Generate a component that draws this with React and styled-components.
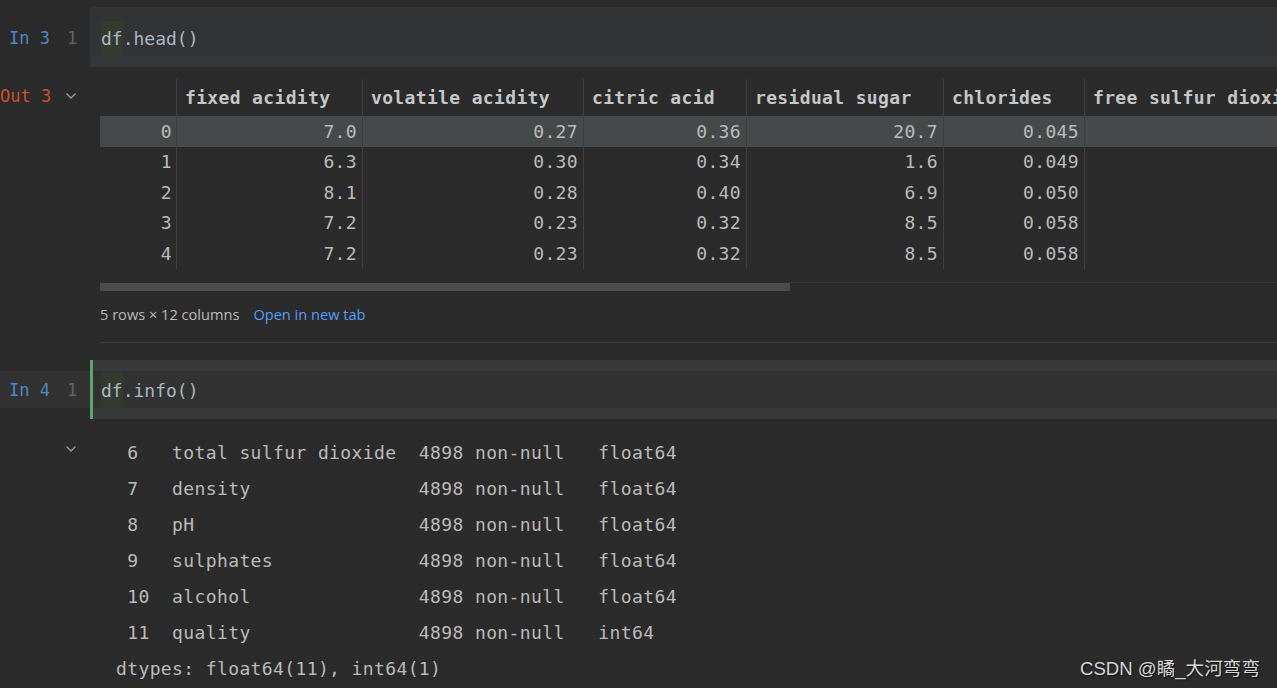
import React from 'react';
import styled, { createGlobalStyle } from 'styled-components';

const mono = `'DejaVu Sans Mono', 'Liberation Mono', monospace`;

const GlobalStyle = createGlobalStyle`
  html, body {
    margin: 0;
    padding: 0;
    background: #2b2b2b;
  }
  body {
    overflow: hidden;
    font-family: ${mono};
  }
`;

const Page = styled.div`
  position: relative;
  width: 1277px;
  height: 688px;
  overflow: hidden;
  padding-top: 7px;
  box-sizing: border-box;
`;

const CellRow = styled.div`
  display: flex;
  height: ${(props) => props.h}px;
  background: ${(props) => props.fill || 'transparent'};
`;

const Gutter = styled.div`
  width: 90px;
  flex: none;
  display: flex;
  align-items: ${(props) => (props.top ? 'flex-start' : 'center')};
  height: ${(props) => (props.top ? '37px' : 'auto')};
  padding-top: ${(props) => (props.top ? 0 : 2)}px;
  box-sizing: border-box;
  font-size: 17px;
  font-family: ${mono};
  line-height: 35px;
`;

const Label = styled.span`
  width: 50px;
  text-align: right;
  white-space: nowrap;
  color: ${(props) => props.color};
`;

const LineNo = styled.span`
  margin-left: 17px;
  color: #606366;
`;

const Chevron = styled.svg`
  margin-left: 15px;
  margin-top: ${(props) => props.offset || 0}px;
  flex: none;
`;

const Editor = styled.div`
  flex: 1;
  display: flex;
  align-items: center;
  background: ${(props) => props.bg};
  border-left: 3px solid ${(props) => props.marker || 'transparent'};
  padding-left: 8px;
  padding-top: ${(props) => (props.code ? 2 : 0)}px;
`;

const Code = styled.span`
  font-size: 18px;
  color: #a9b7c6;
  line-height: 35px;
`;

const Ident = styled.span`
  display: inline-block;
  background: #333b30;
  line-height: 35px;
`;

const OutputRow = styled.div`
  display: flex;
  margin-top: ${(props) => props.gap}px;
`;

const OutputBody = styled.div`
  flex: 1;
  min-width: 0;
  padding-left: ${(props) => props.indent}px;
`;

const TableWrap = styled.div`
  overflow: hidden;
`;

const Table = styled.table`
  width: 1284px;
  table-layout: fixed;
  border-collapse: separate;
  border-spacing: 0;
  font-family: ${mono};
  font-size: 18px;
  letter-spacing: 0.35px;
`;

const HeadCell = styled.th`
  height: 37px;
  padding: 0 0 0 8px;
  text-align: left;
  white-space: nowrap;
  overflow: hidden;
  color: #c4c6c8;
  font-weight: bold;
  border-left: ${(props) => (props.index ? 'none' : '1px solid #3c3f41')};
`;

const Row = styled.tr`
  background: ${(props) => (props.active ? '#45494a' : 'transparent')};
`;

const Cell = styled.td`
  height: 30.5px;
  padding: 0 ${(props) => (props.index ? 4 : 5)}px 0 0;
  text-align: right;
  white-space: nowrap;
  color: #bbbbbb;
  border-left: ${(props) => (props.index ? 'none' : '1px solid #3c3f41')};
`;

const ScrollTrack = styled.div`
  display: flex;
  margin-top: 13px;
  height: 9px;
`;

const ScrollThumb = styled.div`
  width: 690px;
  height: 8px;
  margin-top: 1px;
  background: #4b4b4b;
`;

const ScrollRest = styled.div`
  flex: 1;
  border-top: 1px solid #363738;
`;

const Summary = styled.div`
  display: flex;
  gap: 14px;
  margin-top: 13px;
  height: 20px;
  line-height: 20px;
  font-family: 'Open Sans', 'Noto Sans', sans-serif;
  font-size: 14.6px;
  color: #bbbbbb;
`;

const Link = styled.span`
  color: #589df6;
`;

const Separator = styled.div`
  margin-top: 18px;
  height: 1px;
  background: #3a3b3c;
`;

const InfoText = styled.pre`
  margin: 0;
  font-family: ${mono};
  font-size: 18px;
  letter-spacing: 0.38px;
  line-height: 36px;
  color: #bbbbbb;
`;

const Watermark = styled.div`
  position: absolute;
  right: 17px;
  bottom: 8px;
  font-family: 'Liberation Sans', 'Noto Sans CJK SC', sans-serif;
  font-size: 18.6px;
  color: #d6d6d6;
  text-shadow: 1px 1px 1px #111;
`;

const ChevronIcon = ({ offset }) => (
  <Chevron width="12" height="8" viewBox="0 0 12 8" offset={offset}>
    <path d="M1.5 1.5 L6 6 L10.5 1.5" fill="none" stroke="#9a9da0" strokeWidth="1.3" />
  </Chevron>
);

const InputCell = ({ n, code, current, gap }) => {
  const band = current ? '#37393b' : '#313335';
  const line = current ? '#323232' : '#313335';
  const marker = current ? '#59a869' : null;
  return (
    <div style={{ marginTop: gap }}>
      <CellRow h={current ? 11 : 12}>
        <Gutter />
        <Editor bg={band} marker={marker} />
      </CellRow>
      <CellRow h={37} fill={current ? line : null}>
        <Gutter>
          <Label color="#4a88c7">In {n}</Label>
          <LineNo>1</LineNo>
        </Gutter>
        <Editor bg={line} marker={marker} code>
          <Code>
            <Ident>df</Ident>
            {code}
          </Code>
        </Editor>
      </CellRow>
      <CellRow h={11}>
        <Gutter />
        <Editor bg={current ? band : '#343638'} marker={marker} />
      </CellRow>
    </div>
  );
};

const columns = [
  ['fixed acidity', 186],
  ['volatile acidity', 221],
  ['citric acid', 163],
  ['residual sugar', 197],
  ['chlorides', 141],
  ['free sulfur dioxide', 300],
];

const rows = [
  ['7.0', '0.27', '0.36', '20.7', '0.045', ''],
  ['6.3', '0.30', '0.34', '1.6', '0.049', ''],
  ['8.1', '0.28', '0.40', '6.9', '0.050', ''],
  ['7.2', '0.23', '0.32', '8.5', '0.058', ''],
  ['7.2', '0.23', '0.32', '8.5', '0.058', ''],
];

const info = [
  ['6', 'total sulfur dioxide', 'float64'],
  ['7', 'density', 'float64'],
  ['8', 'pH', 'float64'],
  ['9', 'sulphates', 'float64'],
  ['10', 'alcohol', 'float64'],
  ['11', 'quality', 'int64'],
];

const infoText =
  info
    .map(([i, name, type]) => ' ' + i.padEnd(4) + name.padEnd(22) + '4898 non-null   ' + type)
    .join('\n') + '\ndtypes: float64(11), int64(1)';

const App = () => (
  <Page>
    <GlobalStyle />
    <InputCell n={3} code=".head()" gap={0} />

    <OutputRow gap={12}>
      <Gutter top>
        <Label color="#cc5030">Out 3</Label>
        <ChevronIcon offset={13} />
      </Gutter>
      <OutputBody indent={10}>
        <TableWrap>
          <Table>
            <colgroup>
              <col style={{ width: 76 }} />
              {columns.map(([name, w]) => (
                <col key={name} style={{ width: w }} />
              ))}
            </colgroup>
            <thead>
              <tr>
                <HeadCell index />
                {columns.map(([name]) => (
                  <HeadCell key={name}>{name}</HeadCell>
                ))}
              </tr>
            </thead>
            <tbody>
              {rows.map((r, i) => (
                <Row key={i} active={i === 0}>
                  <Cell index>{i}</Cell>
                  {r.map((v, j) => (
                    <Cell key={j}>{v}</Cell>
                  ))}
                </Row>
              ))}
            </tbody>
          </Table>
        </TableWrap>
        <ScrollTrack>
          <ScrollThumb />
          <ScrollRest />
        </ScrollTrack>
        <Summary>
          <span>5 rows × 12 columns</span>
          <Link>Open in new tab</Link>
        </Summary>
        <Separator />
      </OutputBody>
    </OutputRow>

    <InputCell n={4} code=".info()" current gap={17} />

    <OutputRow gap={16}>
      <Gutter top>
        <Label />
        <ChevronIcon offset={10} />
      </Gutter>
      <OutputBody indent={26}>
        <InfoText>{infoText}</InfoText>
      </OutputBody>
    </OutputRow>

    <Watermark>CSDN @瞲_大河弯弯</Watermark>
  </Page>
);

export default App;
